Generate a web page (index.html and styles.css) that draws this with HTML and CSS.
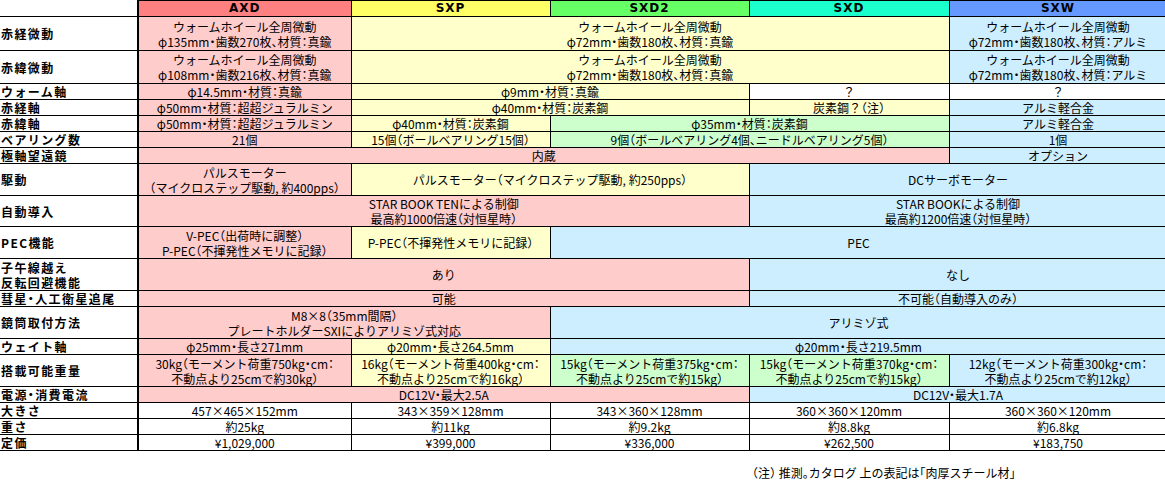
FILE: index.html
```html
<!DOCTYPE html>
<html lang="ja">
<head>
<meta charset="utf-8">
<title>赤道儀 比較表</title>
<link rel="stylesheet" href="styles.css">
</head>
<body>
<div class="page">
<table class="spec">
<colgroup>
<col class="c-label"><col class="c-axd"><col class="c-sxp"><col class="c-sxd2"><col class="c-sxd"><col class="c-sxw">
</colgroup>
<tr class="h16 head">
<th class="lbl blank"></th>
<th class="hd-axd">AXD</th>
<th class="hd-sxp">SXP</th>
<th class="hd-sxd2">SXD2</th>
<th class="hd-sxd">SXD</th>
<th class="hd-sxw">SXW</th>
</tr>
<tr class="h34">
<th class="lbl">赤経微動</th>
<td class="pk">ウォームホイール全周微動<br>φ135mm・歯数270枚、材質：真鍮</td>
<td class="yl" colspan="3">ウォームホイール全周微動<br>φ72mm・歯数180枚、材質：真鍮</td>
<td class="bl">ウォームホイール全周微動<br>φ72mm・歯数180枚、材質：アルミ</td>
</tr>
<tr class="h33">
<th class="lbl">赤緯微動</th>
<td class="pk">ウォームホイール全周微動<br>φ108mm・歯数216枚、材質：真鍮</td>
<td class="yl" colspan="3">ウォームホイール全周微動<br>φ72mm・歯数180枚、材質：真鍮</td>
<td class="bl">ウォームホイール全周微動<br>φ72mm・歯数180枚、材質：アルミ</td>
</tr>
<tr class="h16">
<th class="lbl">ウォーム軸</th>
<td class="pk">φ14.5mm・材質：真鍮</td>
<td class="yl" colspan="2">φ9mm・材質：真鍮</td>
<td class="wh">？</td>
<td class="wh">？</td>
</tr>
<tr class="h16">
<th class="lbl">赤経軸</th>
<td class="pk">φ50mm・材質：超超ジュラルミン</td>
<td class="yl" colspan="2">φ40mm・材質：炭素鋼</td>
<td class="yl">炭素鋼？（注）</td>
<td class="bl">アルミ軽合金</td>
</tr>
<tr class="h16">
<th class="lbl">赤緯軸</th>
<td class="pk">φ50mm・材質：超超ジュラルミン</td>
<td class="yl">φ40mm・材質：炭素鋼</td>
<td class="gr" colspan="2">φ35mm・材質：炭素鋼</td>
<td class="bl">アルミ軽合金</td>
</tr>
<tr class="h15">
<th class="lbl">ベアリング数</th>
<td class="pk">21個</td>
<td class="yl">15個（ボールベアリング15個）</td>
<td class="gr" colspan="2">9個（ボールベアリング4個、ニードルベアリング5個）</td>
<td class="bl">1個</td>
</tr>
<tr class="h16">
<th class="lbl">極軸望遠鏡</th>
<td class="pk" colspan="4">内蔵</td>
<td class="bl">オプション</td>
</tr>
<tr class="h32">
<th class="lbl">駆動</th>
<td class="pk">パルスモーター<br>（マイクロステップ駆動, 約400pps）</td>
<td class="yl" colspan="2">パルスモーター（マイクロステップ駆動, 約250pps）</td>
<td class="bl" colspan="2">DCサーボモーター</td>
</tr>
<tr class="h31">
<th class="lbl">自動導入</th>
<td class="pk" colspan="3">STAR BOOK TENによる制御<br>最高約1000倍速（対恒星時）</td>
<td class="bl" colspan="2">STAR BOOKによる制御<br>最高約1200倍速（対恒星時）</td>
</tr>
<tr class="h32">
<th class="lbl">PEC機能</th>
<td class="pk">V-PEC（出荷時に調整）<br>P-PEC（不揮発性メモリに記録）</td>
<td class="yl">P-PEC（不揮発性メモリに記録）</td>
<td class="bl" colspan="3">PEC</td>
</tr>
<tr class="h32">
<th class="lbl">子午線越え<br>反転回避機能</th>
<td class="pk" colspan="3">あり</td>
<td class="bl" colspan="2">なし</td>
</tr>
<tr class="h16">
<th class="lbl">彗星・人工衛星追尾</th>
<td class="pk" colspan="3">可能</td>
<td class="bl" colspan="2">不可能（自動導入のみ）</td>
</tr>
<tr class="h32">
<th class="lbl">鏡筒取付方法</th>
<td class="pk" colspan="2">M8×8（35mm間隔）<br>プレートホルダーSXIによりアリミゾ式対応</td>
<td class="bl" colspan="3">アリミゾ式</td>
</tr>
<tr class="h16">
<th class="lbl">ウェイト軸</th>
<td class="pk">φ25mm・長さ271mm</td>
<td class="yl">φ20mm・長さ264.5mm</td>
<td class="bl" colspan="3">φ20mm・長さ219.5mm</td>
</tr>
<tr class="h32">
<th class="lbl">搭載可能重量</th>
<td class="pk">30kg（モーメント荷重750kg・cm：<br>不動点より25cmで約30kg）</td>
<td class="yl">16kg（モーメント荷重400kg・cm：<br>不動点より25cmで約16kg）</td>
<td class="gr">15kg（モーメント荷重375kg・cm：<br>不動点より25cmで約15kg）</td>
<td class="gr">15kg（モーメント荷重370kg・cm：<br>不動点より25cmで約15kg）</td>
<td class="bl">12kg（モーメント荷重300kg・cm：<br>不動点より25cmで約12kg）</td>
</tr>
<tr class="h16">
<th class="lbl">電源・消費電流</th>
<td class="pk" colspan="3">DC12V・最大2.5A</td>
<td class="bl" colspan="2">DC12V・最大1.7A</td>
</tr>
<tr class="h16">
<th class="lbl">大きさ</th>
<td class="wh">457×465×152mm</td>
<td class="wh">343×359×128mm</td>
<td class="wh">343×360×128mm</td>
<td class="wh">360×360×120mm</td>
<td class="wh">360×360×120mm</td>
</tr>
<tr class="h16">
<th class="lbl">重さ</th>
<td class="wh">約25kg</td>
<td class="wh">約11kg</td>
<td class="wh">約9.2kg</td>
<td class="wh">約8.8kg</td>
<td class="wh">約6.8kg</td>
</tr>
<tr class="h16">
<th class="lbl">定価</th>
<td class="wh">¥1,029,000</td>
<td class="wh">¥399,000</td>
<td class="wh">¥336,000</td>
<td class="wh">¥262,500</td>
<td class="wh">¥183,750</td>
</tr>
</table>
<p class="note">（注） 推測。カタログ 上の表記は「肉厚スチール材」</p>
</div>
</body>
</html>
```
FILE: styles.css
```css
html, body {
  margin: 0;
  padding: 0;
  overflow: hidden;
  background: #ffffff;
}
body {
  font-family: "Noto Sans CJK JP", "Noto Sans", sans-serif;
  font-size: 12px;
  color: #000000;
  font-feature-settings: "halt";
}
.page {
  width: 1165px;
  overflow: hidden;
}
.spec {
  border-collapse: collapse;
  table-layout: fixed;
  width: 1167px;
}
.c-label { width: 138px; }
.c-axd { width: 213px; }
.c-sxp { width: 199px; }
.c-sxd2 { width: 199px; }
.c-sxd { width: 200px; }
.c-sxw { width: 218px; }

.spec th, .spec td {
  border: 1px solid #000000;
  padding: 0;
  line-height: 15px;
  font-size: 12px;
  font-weight: normal;
  text-align: center;
  vertical-align: middle;
  white-space: nowrap;
  overflow: hidden;
}
.spec .lbl {
  text-align: left;
  font-weight: bold;
  border-left: none;
  border-right: 2px solid #000000;
  padding-left: 1px;
  font-size: 12px;
  letter-spacing: 1.4px;
}
.spec .blank { border-top: none; }
.spec .head th {
  font-weight: bold;
  letter-spacing: 1px;
  font-family: "DejaVu Sans", "Liberation Sans", sans-serif;
  font-size: 12px;
}
.h15 { height: 15px; }
.h16 { height: 16px; }
.h31 { height: 31px; }
.h32 { height: 32px; }
.h33 { height: 33px; }
.h34 { height: 34px; }

.hd-axd { background: #ff8080; }
.hd-sxp { background: #ffff66; }
.hd-sxd2 { background: #66ff66; }
.hd-sxd { background: #1affcc; }
.hd-sxw { background: #6699ff; }

.pk { background: #ffcccc; }
.yl { background: #ffffcc; }
.gr { background: #ccffcc; }
.bl { background: #cceeff; }
.wh { background: #ffffff; }

.note {
  margin: 14px 0 0 0;
  padding-left: 752px;
  line-height: 16px;
  font-size: 12px;
  white-space: nowrap;
}
```
